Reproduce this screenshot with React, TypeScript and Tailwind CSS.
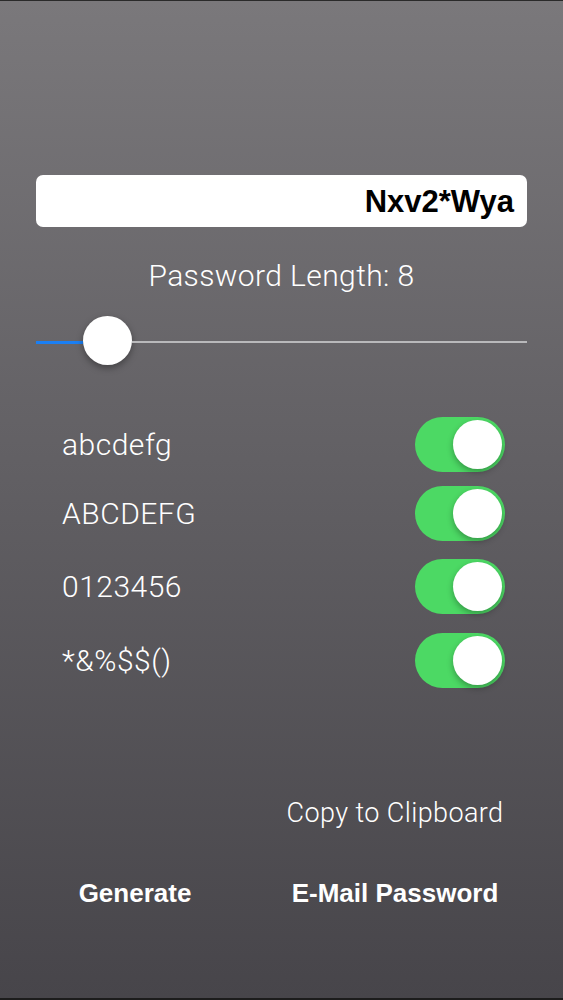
import React from "react";

const ROBOTO = { fontFamily: "Roboto, 'Liberation Sans', sans-serif" };
const HELV = { fontFamily: "'Liberation Sans', Arial, sans-serif" };

function Toggle() {
  return (
    <div className="w-[90px] h-[55px] rounded-full bg-[#4cd964] flex items-center justify-end pr-[3px]">
      <div className="w-[49px] h-[49px] rounded-full bg-white shadow-[0_3px_6px_rgba(0,0,0,0.3)]" />
    </div>
  );
}

function Row({ label, mt }: { label: string; mt: string }) {
  return (
    <div className={`flex items-center justify-between pl-[62px] pr-[58px] h-[55px] ${mt}`}>
      <span className="text-white text-[30px] font-light leading-[36px] tracking-[0.5px]" style={ROBOTO}>
        {label}
      </span>
      <Toggle />
    </div>
  );
}

export default function App() {
  return (
    <div className="w-[563px] h-[1000px] flex flex-col bg-gradient-to-b from-[#7a787b] to-[#47454a] border-t border-t-[#2a2a2a] border-b-2 border-b-[#1c1c1c] overflow-hidden">
      <div className="h-[174px] shrink-0" />
      <div className="mx-[36px] h-[52px] bg-white rounded-[7px] flex items-center justify-end pr-[13px] shrink-0">
        <span className="text-black text-[31px] font-bold leading-none" style={HELV}>
          Nxv2*Wya
        </span>
      </div>
      <div className="mt-[31px] h-[36px] leading-[36px] text-center text-white text-[30px] font-light tracking-[0.4px]" style={ROBOTO}>
        Password Length: 8
      </div>
      <div className="mt-[22px] mx-[36px] h-[49px] flex items-center shrink-0">
        <div className="w-[47px] h-[3px] bg-[#1b7ff3] mt-[3px]" />
        <div className="w-[49px] h-[49px] rounded-full bg-white shadow-[0_3px_7px_rgba(0,0,0,0.35)] shrink-0" />
        <div className="flex-1 h-[2px] bg-[#b9b9bb] mt-[3px]" />
      </div>
      <Row label="abcdefg" mt="mt-[52px]" />
      <Row label="ABCDEFG" mt="mt-[14px]" />
      <Row label="0123456" mt="mt-[18px]" />
      <Row label="*&%$$()" mt="mt-[19px]" />
      <div className="mt-[109px] flex">
        <div className="w-[270px]" />
        <div className="w-[250px] text-center text-white text-[27px] font-light leading-[32px] tracking-[0.4px]" style={ROBOTO}>
          Copy to Clipboard
        </div>
      </div>
      <div className="mt-[49px] flex">
        <div className="w-[270px] text-center text-white text-[26px] font-bold leading-[30px]" style={HELV}>
          Generate
        </div>
        <div className="w-[250px] text-center text-white text-[26px] font-bold leading-[30px]" style={HELV}>
          E-Mail Password
        </div>
      </div>
    </div>
  );
}
